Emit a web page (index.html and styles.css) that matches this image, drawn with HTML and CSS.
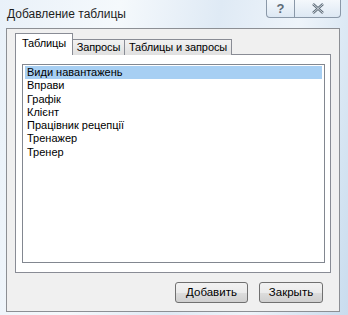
FILE: index.html
```html
<!DOCTYPE html>
<html>
<head>
<meta charset="utf-8">
<title>Добавление таблицы</title>
<link rel="stylesheet" href="styles.css">
</head>
<body>
	<div class="window">
		<div class="titlebar">
			<span class="title">Добавление таблицы</span>
			<div class="caption">
				<span class="cap-btn cap-help">?</span>
				<span class="cap-btn cap-close">
					<svg width="14" height="11" viewBox="0 0 14 11">
						<path d="M2 1 L12 10 M12 1 L2 10" stroke="#5d6b78" stroke-width="2.4" fill="none"/>
						<path d="M2 1 L12 10 M12 1 L2 10" stroke="#eef3f8" stroke-width="0.8" fill="none"/>
					</svg>
				</span>
			</div>
		</div>
		<div class="client">
			<div class="tabs">
				<span class="tab tab-tables active">Таблицы</span>
				<span class="tab tab-queries">Запросы</span>
				<span class="tab tab-both">Таблицы и запросы</span>
			</div>
			<div class="panel">
				<ul class="list">
					<li class="selected">Види навантажень</li>
					<li>Вправи</li>
					<li>Графік</li>
					<li>Клієнт</li>
					<li>Працівник рецепції</li>
					<li>Тренажер</li>
					<li>Тренер</li>
				</ul>
			</div>
			<div class="buttons">
				<span class="btn btn-add">Добавить</span>
				<span class="btn btn-close">Закрыть</span>
			</div>
		</div>
	</div>
</body>
</html>
```
FILE: styles.css
```css
*{
	margin: 0;
	padding: 0;
}
body {
	width: 348px;
	height: 315px;
	overflow: hidden;
	font-family: "Liberation Sans", Arial, sans-serif;
	color: #000;
	background: linear-gradient(100deg, #e9f1f9 0%, #f5f9fc 30%, #dfeaf5 55%, #eef4fa 75%, #c9dcee 100%);
}
.window {
	height: 315px;
	display: flex;
	flex-direction: column;
	padding: 0 8px 3px 6px;
	box-sizing: border-box;
}
/* заголовок окна */
.titlebar {
	height: 28px;
	display: flex;
	justify-content: space-between;
	align-items: flex-start;
}
.title {
	font-size: 12px;
	margin-top: 7px;
	padding-left: 1px;
	color: #1e1e1e;
}
.caption {
	display: flex;
	margin-right: -1px;
}
.cap-btn {
	height: 17px;
	display: flex;
	align-items: center;
	justify-content: center;
	border: 1px solid #8a98a8;
	border-top: none;
	background: linear-gradient(#f4f8fc, #dde8f3);
	color: #5d6b78;
}
.cap-help {
	width: 27px;
	border-radius: 0 0 0 4px;
	font-size: 13px;
	font-weight: bold;
}
.cap-close {
	width: 45px;
	border-left: none;
	border-radius: 0 0 4px 0;
}
/* клиентская часть */
.client {
	flex: 1;
	background-color: #f0f0f0;
	border: 1px solid #8c8f94;
	display: flex;
	flex-direction: column;
	padding: 5px 8px 8px 8px;
	font-size: 11px;
}
.tabs {
	display: flex;
	align-items: flex-end;
	height: 21px;
	position: relative;
	z-index: 1;
}
.tab {
	height: 15px;
	line-height: 15px;
	border: 1px solid #898c95;
	border-bottom: none;
	border-left: none;
	background: linear-gradient(#f2f2f2, #e0e0e0);
	font-size: 11px;
	text-align: center;
	white-space: nowrap;
	letter-spacing: -0.1px;
}
.tab.active {
	height: 21px;
	line-height: 19px;
	border-left: 1px solid #898c95;
	background: #fff;
}
.tab-tables {
	width: 56px;
}
.tab-queries {
	width: 51px;
}
.tab-both {
	width: 106px;
}
.panel {
	height: 219px;
	background: #fff;
	border: 1px solid #898c95;
	padding: 9px 5px 9px 6px;
	box-sizing: border-box;
	margin-top: -1px;
}
.list {
	list-style: none;
	height: 100%;
	box-sizing: border-box;
	border: 1px solid #828790;
	padding: 1px 2px;
	font-size: 11px;
}
.list li {
	height: 13.3px;
	line-height: 13px;
	padding-left: 2px;
}
.list .selected {
	background-color: #a7cff3;
}
.buttons {
	display: flex;
	justify-content: flex-end;
	gap: 11px;
	margin-top: 9px;
	padding-right: 8px;
}
.btn {
	height: 19px;
	line-height: 19px;
	text-align: center;
	border: 1px solid #707070;
	border-radius: 3px;
	background: linear-gradient(#f2f2f2 0%, #ebebeb 50%, #dddddd 51%, #cfcfcf 100%);
	font-size: 11.5px;
}
.btn-add {
	width: 71px;
}
.btn-close {
	width: 62px;
}
```
